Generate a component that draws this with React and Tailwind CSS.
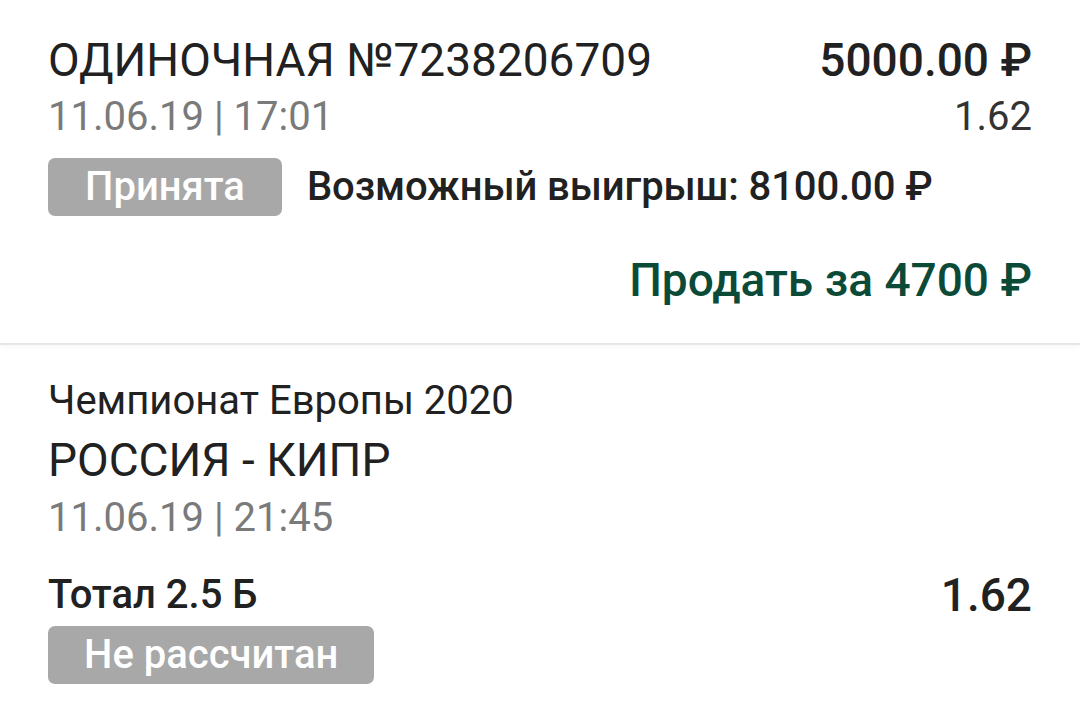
export default function App() {
  return (
    <div className="h-[707px] w-[1080px] overflow-hidden bg-white font-['Roboto',sans-serif] text-[#212121]">
      <div className="px-12 pt-[34px] pb-[37px]">
        <div className="flex items-center justify-between leading-[52px]">
          <span className="text-[46px]">ОДИНОЧНАЯ №7238206709</span>
          <span className="text-[46px] font-medium">5000.00 ₽</span>
        </div>
        <div className="flex items-center justify-between text-[40px] leading-[62px]">
          <span className="text-[#7a7a7a]">11.06.19 | 17:01</span>
          <span className="text-[#333]">1.62</span>
        </div>
        <div className="mt-[9px] flex items-center gap-[25px]">
          <span className="rounded-[7px] bg-[#a8a8a8] px-[37px] text-[40px] font-medium leading-[58px] text-white">
            Принята
          </span>
          <span className="text-[40px] font-medium tracking-[-0.1px]">Возможный выигрыш: 8100.00 ₽</span>
        </div>
        <div className="mt-[37px] text-right text-[46px] font-medium leading-[52px] text-[#0c4a38]">
          Продать за 4700 ₽
        </div>
      </div>
      <div className="h-[2px] bg-[#e6e6e6] shadow-[0_2px_4px_rgba(0,0,0,0.06)]" />
      <div className="px-12 pt-[29px]">
        <div className="text-[40px] leading-[54px]">Чемпионат Европы 2020</div>
        <div className="text-[46px] leading-[64px]">РОССИЯ - КИПР</div>
        <div className="text-[40px] leading-[52px] text-[#7a7a7a]">11.06.19 | 21:45</div>
        <div className="mt-[26px] flex items-center justify-between leading-[50px]">
          <span className="text-[40px] font-medium">Тотал 2.5 Б</span>
          <span className="text-[46px] font-medium">1.62</span>
        </div>
        <div className="mt-[6px] flex">
          <span className="rounded-[7px] bg-[#a8a8a8] px-[36px] text-[40px] font-medium leading-[58px] text-white">
            Не рассчитан
          </span>
        </div>
      </div>
    </div>
  );
}
